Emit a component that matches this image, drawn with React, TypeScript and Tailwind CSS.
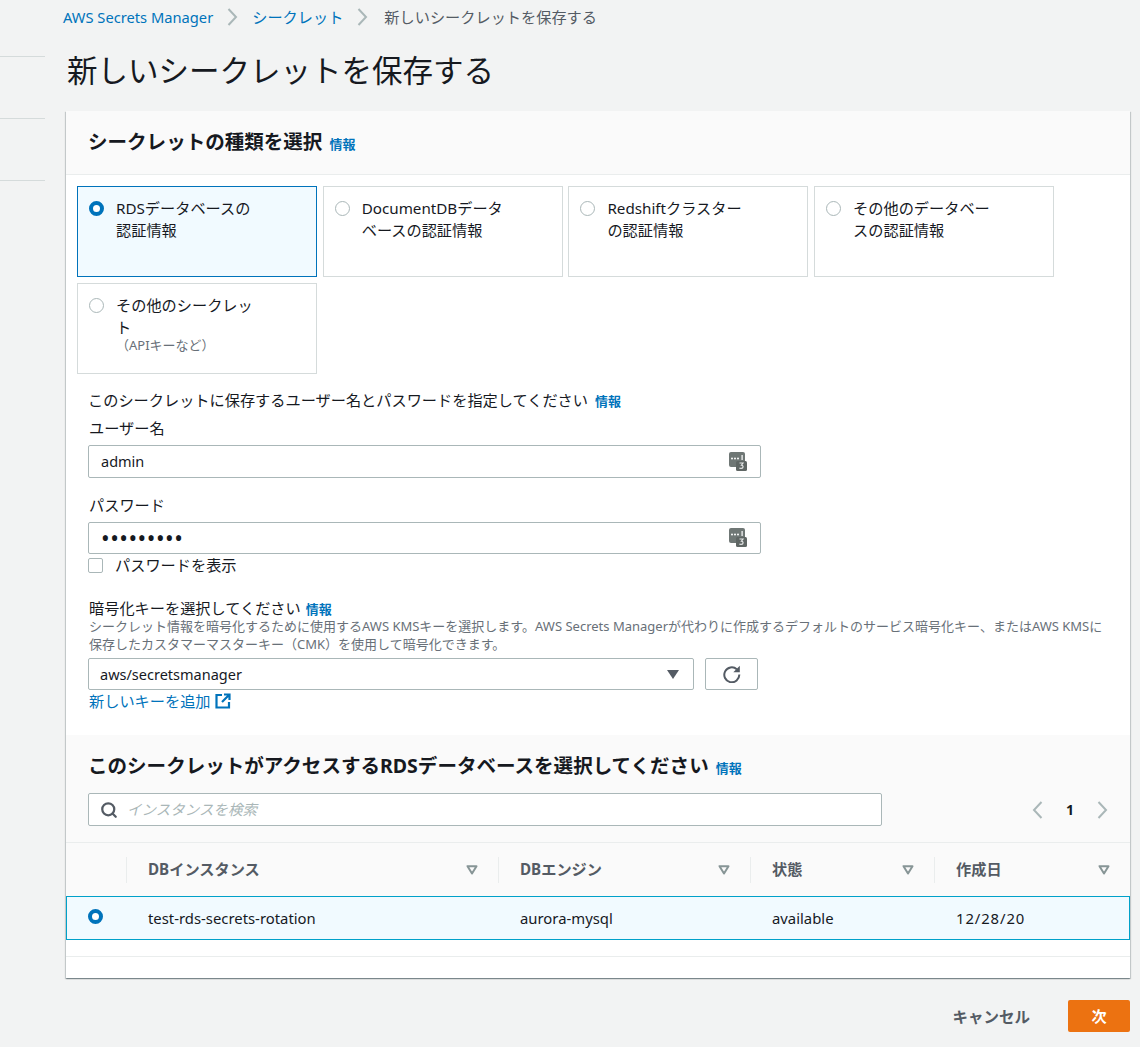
import { Search } from "lucide-react";

const font = '"Noto Sans", "Noto Sans CJK JP", sans-serif';

const options = [
  { id: "rds", lines: ["RDSデータベースの", "認証情報"], selected: true },
  { id: "docdb", lines: ["DocumentDBデータ", "ベースの認証情報"] },
  { id: "redshift", lines: ["Redshiftクラスター", "の認証情報"] },
  { id: "other-db", lines: ["その他のデータベー", "スの認証情報"] },
  { id: "other", lines: ["その他のシークレッ", "ト"], note: "（APIキーなど）" },
];

const columns = [
  { label: "DBインスタンス", value: "test-rds-secrets-rotation", extra: "" },
  { label: "DBエンジン", value: "aurora-mysql", extra: "" },
  { label: "状態", value: "available", extra: "" },
  { label: "作成日", value: "12/28/20", extra: "tracking-[0.9px]" },
];

function Info() {
  return <span className="text-[13px] font-bold leading-[18px] text-[#0073bb]">情報</span>;
}

function Radio({ checked }: { checked?: boolean }) {
  return checked ? (
    <span className="block h-[15px] w-[15px] shrink-0 rounded-full border-[4px] border-[#0073bb] bg-white" />
  ) : (
    <span className="block h-[15px] w-[15px] shrink-0 rounded-full border border-[#aab7b8] bg-white" />
  );
}

function Chevron({ left, color = "#aab7b8" }: { left?: boolean; color?: string }) {
  return (
    <svg width="11" height="18" viewBox="0 0 11 18" fill="none" stroke={color} strokeWidth="2" className="shrink-0">
      <path d={left ? "M9.500 1L2 9l7.500 8" : "M1.500 1L9 9l-7.500 8"} />
    </svg>
  );
}

// password manager badge that sits inside the inputs
function KeyBadge() {
  return (
    <svg width="18" height="20" viewBox="0 0 18 20" className="shrink-0">
      <rect x="0" y="0" width="16" height="15" rx="2" fill="#6f7775" />
      <rect x="7" y="9" width="11" height="10" rx="1.500" fill="#5f6664" />
      <circle cx="3" cy="6.500" r="1" fill="#fff" />
      <circle cx="6" cy="6.500" r="1" fill="#fff" />
      <circle cx="9" cy="6.500" r="1" fill="#fff" />
      <rect x="12.500" y="3" width="1.200" height="5" fill="#fff" />
      <path d="M10.500 11h3.500l-1.600 2.200c1 .1 1.700.7 1.700 1.500 0 1-.9 1.700-2 1.700-.7 0-1.300-.2-1.700-.6" fill="none" stroke="#e6e8e8" strokeWidth="1.200" />
    </svg>
  );
}

function TextInput({ short, children }: { short?: boolean; children: React.ReactNode }) {
  return (
    <div
      className={`flex w-[673px] items-center justify-between rounded-[2px] border border-[#aab7b8] bg-white pl-[12px] pr-[13px] ${
        short ? "h-[32px]" : "h-[33px]"
      }`}
    >
      {children}
      <KeyBadge />
    </div>
  );
}

function SortIcon() {
  return (
    <svg width="12" height="10" viewBox="0 0 12 10" className="shrink-0">
      <path d="M1.500 1.200h9L6 8.500z" fill="none" stroke="#879596" strokeWidth="2" strokeLinejoin="round" />
    </svg>
  );
}

export default function App() {
  return (
    <div
      className="flex h-[1047px] w-[1140px] overflow-hidden bg-[#f2f3f3] text-[#16191f]"
      style={{ fontFamily: font }}
    >
      {/* collapsed side navigation, only its dividers show */}
      <aside className="flex w-[45px] shrink-0 flex-col gap-[61px] pt-[56px]">
        <div className="h-px bg-[#d5dbdb]" />
        <div className="h-px bg-[#d5dbdb]" />
        <div className="h-px bg-[#d5dbdb]" />
      </aside>

      <main className="w-[1085px] shrink-0">
        {/* breadcrumb */}
        <nav className="flex h-[33px] items-center gap-[14px] pl-[18px] leading-[20px]">
          <span className="text-[14.700px] text-[#0073bb]">AWS Secrets Manager</span>
          <Chevron />
          <span className="text-[15.200px] text-[#0073bb]">シークレット</span>
          <Chevron />
          <span className="ml-[2px] text-[15.200px] text-[#545b64]">新しいシークレットを保存する</span>
        </nav>

        <h1 className="h-[78px] pl-[22px] pt-[14px] text-[30.500px] font-normal leading-[46px]">
          新しいシークレットを保存する
        </h1>

        {/* main card */}
        <section className="ml-[21px] h-[867px] w-[1064px] bg-white shadow-[0_1px_1px_0_rgba(0,28,36,0.3),1px_1px_1px_0_rgba(0,28,36,0.15),-1px_1px_1px_0_rgba(0,28,36,0.15)]">
          <header className="flex h-[64px] items-baseline gap-[7px] border-b border-[#eaeded] bg-[#fafafa] pl-[22px] pt-[17px]">
            <h2 className="text-[19.550px] font-bold leading-[28px]">シークレットの種類を選択</h2>
            <Info />
          </header>

          <div className="flex flex-wrap gap-x-[5.700px] gap-y-[6px] pl-[11px] pt-[11px]">
            {options.map((opt) => (
              <div
                key={opt.id}
                className={`flex h-[91px] w-[240px] gap-[12px] border px-[11px] pt-[10px] ${
                  opt.selected ? "border-[#0073bb] bg-[#f1faff]" : "border-[#d5dbdb] bg-white"
                }`}
              >
                <div className="pt-[4px]">
                  <Radio checked={opt.selected} />
                </div>
                <div className="text-[15.200px] leading-[22px]">
                  {opt.lines.map((l) => (
                    <div key={l}>{l}</div>
                  ))}
                  {opt.note && <div className="-mt-[2px] text-[13px] leading-[18px] text-[#687078]">{opt.note}</div>}
                </div>
              </div>
            ))}
          </div>

          {/* credentials form */}
          <div className="pl-[22px] pr-[18px] pt-[15px]">
            <div className="flex h-[24px] items-baseline gap-[7px] text-[15.200px]">
              <span>このシークレットに保存するユーザー名とパスワードを指定してください</span>
              <Info />
            </div>
            <div className="mt-[3px] h-[25px] pl-[1px] text-[15.200px] leading-[24px]">ユーザー名</div>
            <div className="mt-[4px]">
              <TextInput>
                <span className="text-[14.500px]">admin</span>
              </TextInput>
            </div>
            <div className="mt-[15px] h-[25px] pl-[1px] text-[15.200px] leading-[24px]">パスワード</div>
            <div className="mt-[4px]">
              <TextInput short>
                <span className="text-[23px] leading-none tracking-[0.5px]">•••••••••</span>
              </TextInput>
            </div>
            <div className="mt-[1px] flex h-[20px] items-center gap-[12px] text-[15.200px]">
              <span className="block h-[15px] w-[15px] rounded-[2px] border border-[#aab7b8] bg-white" />
              <span>パスワードを表示</span>
            </div>

            <div className="mt-[22px] flex h-[20px] items-baseline gap-[5px] pl-[1px] text-[15.200px]">
              <span>暗号化キーを選択してください</span>
              <Info />
            </div>
            <p className="pl-[1px] text-[13px] leading-[18px] text-[#687078]">
              シークレット情報を暗号化するために使用するAWS KMSキーを選択します。AWS Secrets Managerが代わりに作成するデフォルトのサービス暗号化キー、またはAWS KMSに保存したカスタマーマスターキー（CMK）を使用して暗号化できます。
            </p>
            <div className="mt-[5px] flex gap-[11px]">
              <div className="flex h-[32px] w-[606px] items-center justify-between rounded-[2px] border border-[#aab7b8] bg-white pl-[11px] pr-[14px] text-[14.500px]">
                <span className="pt-[1px]">aws/secretsmanager</span>
                <span className="h-0 w-0 border-x-[6px] border-t-[9px] border-x-transparent border-t-[#545b64]" />
              </div>
              <button className="flex h-[32px] w-[53px] items-center justify-center rounded-[2px] border border-[#aab7b8] bg-white">
                <svg width="18" height="18" viewBox="0 0 18 18" fill="none">
                  <path d="M13.800 4.200A7.500 7.500 0 1 0 16.300 9.500" stroke="#545b64" strokeWidth="2" />
                  <path d="M16.800 0.800v6.500h-6.500z" fill="#545b64" />
                </svg>
              </button>
            </div>
            <div className="flex h-[22px] items-center gap-[4px] pl-[1px] text-[15.200px] text-[#0073bb]">
              <span>新しいキーを追加</span>
              <svg width="16" height="16" viewBox="0 0 16 16" fill="none" stroke="#0073bb" strokeWidth="2.200">
                <path d="M7 2H1.500v12.500H14V9" />
                <path d="M9 1.500h5.500V7M14.500 1.500L7 9" />
              </svg>
            </div>
          </div>

          {/* database table */}
          <div className="mt-[23px] bg-[#fafafa]">
            <div className="h-[58px] pl-[22px] pt-[17px]">
              <div className="flex items-baseline gap-[7px]">
                <h2 className="text-[19.550px] font-bold leading-[28px]">
                  このシークレットがアクセスするRDSデータベースを選択してください
                </h2>
                <Info />
              </div>
            </div>
            <div className="flex h-[50px] items-start justify-between border-b border-[#eaeded] pl-[22px] pr-[22px]">
              <div className="flex h-[33px] w-[794px] items-center gap-[9px] rounded-[2px] border border-[#aab7b8] bg-white pl-[11px]">
                <Search className="h-[18px] w-[18px] text-[#545b64]" strokeWidth={3} />
                <span className="text-[14.500px] italic text-[#aab7b8]">インスタンスを検索</span>
              </div>
              <div className="flex h-[33px] items-center gap-[23px]">
                <Chevron left />
                <span className="text-[14px] font-bold text-[#16191f]">1</span>
                <Chevron />
              </div>
            </div>
            <div className="grid h-[53px] grid-cols-[60px_372px_252px_184px_196px] items-center">
              <div />
              {columns.map((col) => (
                <div
                  key={col.label}
                  className="flex h-[26px] items-center justify-between border-l border-[#eaeded] pl-[21px] pr-[20px] text-[15.200px] font-bold text-[#545b64]"
                >
                  <span>{col.label}</span>
                  <SortIcon />
                </div>
              ))}
            </div>
          </div>
          <div className="grid h-[44px] grid-cols-[60px_372px_252px_184px_196px] items-center border border-[#00a1c9] bg-[#f1faff] text-[14.850px]">
            <div className="flex justify-center pb-[3px] pr-[4px]">
              <Radio checked />
            </div>
            {columns.map((col) => (
              <div key={col.label} className={`pl-[21px] ${col.extra}`}>
                {col.value}
              </div>
            ))}
          </div>
          <div className="mt-[16px] h-px bg-[#eaeded]" />
        </section>

        {/* footer actions */}
        <div className="mt-[22px] flex items-center justify-end">
          <span className="pt-[3px] text-[15.500px] font-bold text-[#545b64]">キャンセル</span>
          <button className="ml-[38px] flex h-[32px] w-[62px] items-center justify-center rounded-[2px] bg-[#ec7211] pt-[1px] text-[15.200px] font-bold text-white">
            次
          </button>
        </div>
      </main>
    </div>
  );
}
